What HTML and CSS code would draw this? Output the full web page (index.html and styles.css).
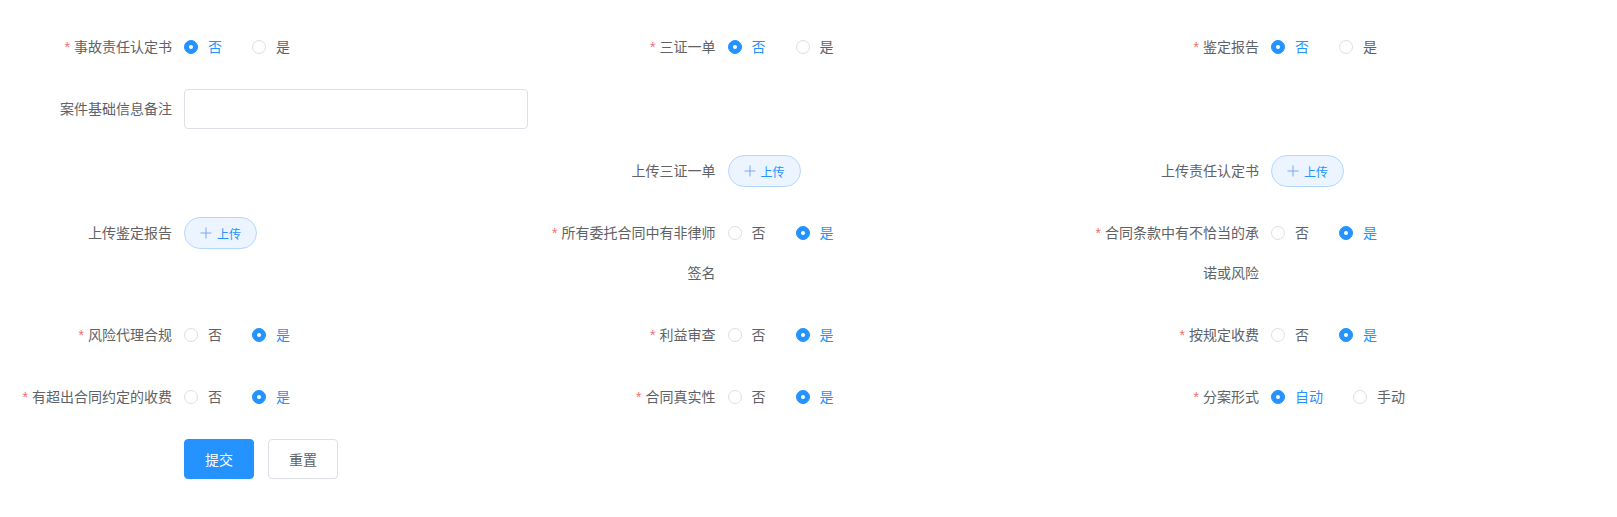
FILE: index.html
```html
<!DOCTYPE html>
<html lang="zh-CN">
<head>
    <meta charset="UTF-8">
    <meta name="viewport" content="width=device-width, initial-scale=1.0">
    <title>案件信息</title>
    <link rel="stylesheet" href="styles.css">
</head>
<body>

    <form class="case-form">
        <div class="row">
            <!-- row 1 -->
            <div class="col">
                <div class="item">
                    <label class="item-label required">事故责任认定书</label>
                    <div class="item-content">
                        <span class="radio checked"><span class="radio-inner"></span><span class="radio-label">否</span></span>
                        <span class="radio"><span class="radio-inner"></span><span class="radio-label">是</span></span>
                    </div>
                </div>
            </div>
            <div class="col">
                <div class="item">
                    <label class="item-label required">三证一单</label>
                    <div class="item-content">
                        <span class="radio checked"><span class="radio-inner"></span><span class="radio-label">否</span></span>
                        <span class="radio"><span class="radio-inner"></span><span class="radio-label">是</span></span>
                    </div>
                </div>
            </div>
            <div class="col">
                <div class="item">
                    <label class="item-label required">鉴定报告</label>
                    <div class="item-content">
                        <span class="radio checked"><span class="radio-inner"></span><span class="radio-label">否</span></span>
                        <span class="radio"><span class="radio-inner"></span><span class="radio-label">是</span></span>
                    </div>
                </div>
            </div>

            <!-- row 2 -->
            <div class="col">
                <div class="item">
                    <label class="item-label" for="remark">案件基础信息备注</label>
                    <div class="item-content">
                        <input type="text" id="remark" class="text-input">
                    </div>
                </div>
            </div>
            <div class="col"></div>
            <div class="col"></div>

            <!-- row 3 -->
            <div class="col"></div>
            <div class="col">
                <div class="item">
                    <label class="item-label">上传三证一单</label>
                    <div class="item-content">
                        <button type="button" class="upload-btn">
                            <svg width="12" height="12" viewBox="0 0 12 12"><path d="M6 0.5v11M0.5 6h11" stroke="currentColor" stroke-width="1"/></svg>
                            上传
                        </button>
                    </div>
                </div>
            </div>
            <div class="col">
                <div class="item">
                    <label class="item-label">上传责任认定书</label>
                    <div class="item-content">
                        <button type="button" class="upload-btn">
                            <svg width="12" height="12" viewBox="0 0 12 12"><path d="M6 0.5v11M0.5 6h11" stroke="currentColor" stroke-width="1"/></svg>
                            上传
                        </button>
                    </div>
                </div>
            </div>

            <!-- row 4 -->
            <div class="col">
                <div class="item">
                    <label class="item-label">上传鉴定报告</label>
                    <div class="item-content">
                        <button type="button" class="upload-btn">
                            <svg width="12" height="12" viewBox="0 0 12 12"><path d="M6 0.5v11M0.5 6h11" stroke="currentColor" stroke-width="1"/></svg>
                            上传
                        </button>
                    </div>
                </div>
            </div>
            <div class="col">
                <div class="item">
                    <label class="item-label required">所有委托合同中有非律师签名</label>
                    <div class="item-content">
                        <span class="radio"><span class="radio-inner"></span><span class="radio-label">否</span></span>
                        <span class="radio checked"><span class="radio-inner"></span><span class="radio-label">是</span></span>
                    </div>
                </div>
            </div>
            <div class="col">
                <div class="item">
                    <label class="item-label required">合同条款中有不恰当的承诺或风险</label>
                    <div class="item-content">
                        <span class="radio"><span class="radio-inner"></span><span class="radio-label">否</span></span>
                        <span class="radio checked"><span class="radio-inner"></span><span class="radio-label">是</span></span>
                    </div>
                </div>
            </div>

            <!-- row 5 -->
            <div class="col">
                <div class="item">
                    <label class="item-label required">风险代理合规</label>
                    <div class="item-content">
                        <span class="radio"><span class="radio-inner"></span><span class="radio-label">否</span></span>
                        <span class="radio checked"><span class="radio-inner"></span><span class="radio-label">是</span></span>
                    </div>
                </div>
            </div>
            <div class="col">
                <div class="item">
                    <label class="item-label required">利益审查</label>
                    <div class="item-content">
                        <span class="radio"><span class="radio-inner"></span><span class="radio-label">否</span></span>
                        <span class="radio checked"><span class="radio-inner"></span><span class="radio-label">是</span></span>
                    </div>
                </div>
            </div>
            <div class="col">
                <div class="item">
                    <label class="item-label required">按规定收费</label>
                    <div class="item-content">
                        <span class="radio"><span class="radio-inner"></span><span class="radio-label">否</span></span>
                        <span class="radio checked"><span class="radio-inner"></span><span class="radio-label">是</span></span>
                    </div>
                </div>
            </div>

            <!-- row 6 -->
            <div class="col">
                <div class="item">
                    <label class="item-label required">有超出合同约定的收费</label>
                    <div class="item-content">
                        <span class="radio"><span class="radio-inner"></span><span class="radio-label">否</span></span>
                        <span class="radio checked"><span class="radio-inner"></span><span class="radio-label">是</span></span>
                    </div>
                </div>
            </div>
            <div class="col">
                <div class="item">
                    <label class="item-label required">合同真实性</label>
                    <div class="item-content">
                        <span class="radio"><span class="radio-inner"></span><span class="radio-label">否</span></span>
                        <span class="radio checked"><span class="radio-inner"></span><span class="radio-label">是</span></span>
                    </div>
                </div>
            </div>
            <div class="col">
                <div class="item">
                    <label class="item-label required">分案形式</label>
                    <div class="item-content">
                        <span class="radio checked"><span class="radio-inner"></span><span class="radio-label">自动</span></span>
                        <span class="radio"><span class="radio-inner"></span><span class="radio-label">手动</span></span>
                    </div>
                </div>
            </div>
        </div>

        <div class="item actions">
            <button type="submit" class="btn btn-primary">提交</button>
            <button type="reset" class="btn">重置</button>
        </div>
    </form>

</body>
</html>
```

FILE: styles.css
```css
body {
    margin: 0;
    background-color: white;
    font-family: "Liberation Sans", "Noto Sans CJK SC", sans-serif;
    font-size: 14px;
    color: #606266;
}

.case-form {
    padding: 27px 0 0 4px;
}

.row {
    display: grid;
    grid-template-columns: repeat(3, 543.5px);
    margin-left: -10px;
}

.col {
    padding: 0 10px;
}

.item {
    display: flex;
    align-items: flex-start;
    margin-bottom: 22px;
}

.item-label {
    flex: none;
    width: 180px;
    box-sizing: border-box;
    padding-right: 12px;
    text-align: right;
    line-height: 40px;
    font-size: 14px;
    color: #606266;
}

.required::before {
    content: "*";
    color: #f56c6c;
    margin-right: 4px;
}

.item-content {
    flex: 1;
    min-width: 0;
    display: flex;
    align-items: center;
    height: 40px;
    font-size: 14px;
}

/* radio */
.radio {
    display: flex;
    align-items: center;
    margin-right: 30px;
    line-height: 1;
    cursor: pointer;
}

.radio-inner {
    width: 14px;
    height: 14px;
    box-sizing: border-box;
    border: 1px solid #dcdfe6;
    border-radius: 50%;
    background-color: white;
    position: relative;
}

.radio-label {
    padding-left: 10px;
    color: #606266;
}

.radio.checked .radio-inner {
    border-color: #2492ff;
    background-color: #2492ff;
}

.radio.checked .radio-inner::after {
    content: "";
    position: absolute;
    left: 50%;
    top: 50%;
    width: 4px;
    height: 4px;
    margin: -2px 0 0 -2px;
    border-radius: 50%;
    background-color: white;
}

.radio.checked .radio-label {
    color: #2492ff;
}

/* input */
.text-input {
    width: 100%;
    height: 40px;
    box-sizing: border-box;
    padding: 0 15px;
    border: 1px solid #dcdfe6;
    border-radius: 4px;
    font-size: 14px;
    color: #606266;
    outline: none;
}

/* upload button */
.upload-btn {
    display: inline-flex;
    align-items: center;
    gap: 5px;
    height: 32px;
    padding: 0 15px;
    border: 1px solid #b3d8ff;
    border-radius: 20px;
    background-color: #ecf5ff;
    color: #2492ff;
    font-family: inherit;
    font-size: 12px;
    cursor: pointer;
}

.upload-btn svg {
    color: #7aa9ee;
}

/* actions */
.actions {
    margin-left: 180px;
    gap: 14px;
}

.btn {
    height: 40px;
    padding: 0 20px;
    border: 1px solid #dcdfe6;
    border-radius: 4px;
    background-color: white;
    color: #606266;
    font-family: inherit;
    font-size: 14px;
    cursor: pointer;
}

.btn-primary {
    border-color: #2492ff;
    background-color: #2492ff;
    color: white;
}
```
